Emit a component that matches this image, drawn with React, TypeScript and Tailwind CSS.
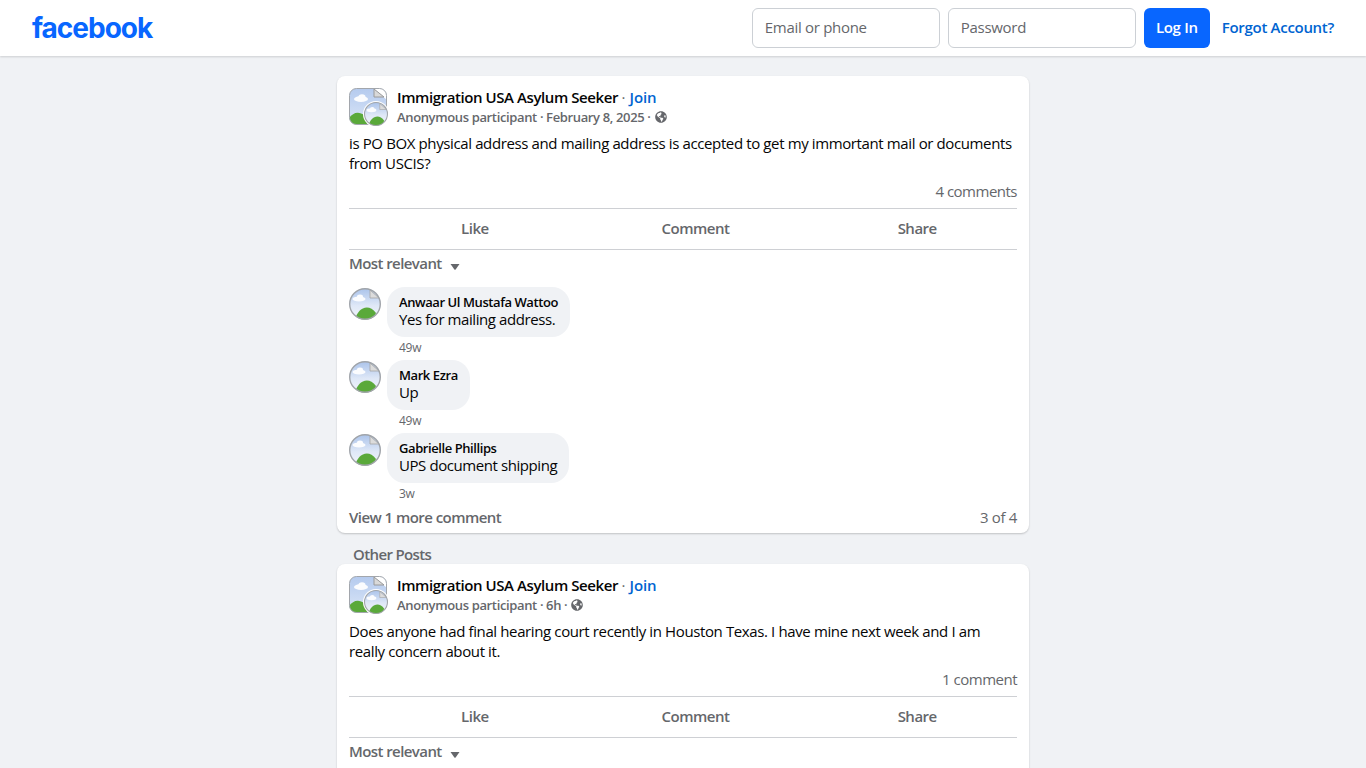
import React from 'react';
import { FaGlobeAmericas } from 'react-icons/fa';

const Avatar = ({ size = 32 }: { size?: number }) => {
  const id = `pic${size}`;
  return (
    <svg width={size} height={size} viewBox="0 0 32 32" className="block">
      <defs>
        <clipPath id={id}>
          <circle cx="16" cy="16" r="15.5" />
        </clipPath>
        <linearGradient id={`${id}sky`} x1="0" y1="0" x2="0" y2="1">
          <stop offset="0" stopColor="#a9c2ea" />
          <stop offset="0.55" stopColor="#dfe8f7" />
          <stop offset="1" stopColor="#f3f6fb" />
        </linearGradient>
      </defs>
      <g clipPath={`url(#${id})`}>
        <rect width="32" height="32" fill={`url(#${id}sky)`} />
        <ellipse cx="10" cy="11" rx="6.5" ry="2.6" fill="#fbfcfe" />
        <ellipse cx="11" cy="9" rx="3" ry="2.4" fill="#fbfcfe" />
        <path d="M6 32 C8 21 19 14 27 25 L24 32 Z" fill="#5aa93a" />
        <path d="M20 0 L32 11 L32 0 Z" fill="#fff" />
        <path d="M21 2 L21 10 L30 10 Z" fill="#dcdcdc" stroke="#a5a5a5" strokeWidth="0.8" />
      </g>
      <circle cx="16" cy="16" r="15.3" fill="none" stroke="#a0a4a9" strokeWidth="1.4" />
    </svg>
  );
};

const GroupAvatar = () => (
  <div className="relative w-10 h-9 shrink-0">
    <svg width="38" height="37" viewBox="0 0 38 37" className="block">
      <defs>
        <clipPath id="groupClip">
          <rect x="0.5" y="0.5" width="37" height="36" rx="7" />
        </clipPath>
        <linearGradient id="groupSky" x1="0" y1="0" x2="0" y2="1">
          <stop offset="0" stopColor="#b4caee" />
          <stop offset="1" stopColor="#dbe6f7" />
        </linearGradient>
      </defs>
      <g clipPath="url(#groupClip)">
        <rect width="38" height="37" fill="url(#groupSky)" />
        <ellipse cx="12" cy="11" rx="7" ry="3" fill="#fbfcfe" />
        <ellipse cx="13" cy="9" rx="3.5" ry="2.8" fill="#fbfcfe" />
        <path d="M0 37 L0 30 C6 22 14 22 24 37 Z" fill="#5aa93a" />
        <path d="M24 0 L38 12 L38 0 Z" fill="#fff" />
        <path d="M25 1 L25 9 L35 9 Z" fill="#d9d9d9" stroke="#9a9a9a" strokeWidth="1" />
      </g>
      <rect x="0.5" y="0.5" width="37" height="36" rx="7" fill="none" stroke="#a2a6ac" />
    </svg>
    <div className="absolute left-[14px] top-[13px] rounded-full bg-white p-px">
      <Avatar size={24} />
    </div>
  </div>
);

const PostHeader = ({ meta }: { meta: string }) => (
  <div className="flex gap-2 items-start">
    <GroupAvatar />
    <div className="min-w-0">
      <div className="h-5 text-[15px] leading-[18px] font-semibold text-[#050505] tracking-[-0.42px]">
        Immigration USA Asylum Seeker <span className="font-normal text-[#65676b]">·</span>{' '}
        <span className="ml-px text-[#0064d1] tracking-[-0.1px]">Join</span>
      </div>
      <div className="flex items-center gap-1 h-[18px] text-[13px] leading-[18px] font-semibold text-[#65676b] tracking-[-0.36px]">
        {meta} · <FaGlobeAmericas className="w-3 h-3 text-[#65676b]" />
      </div>
    </div>
  </div>
);

const Actions = () => (
  <div className="flex h-[42px] pb-px border-y border-[#ced0d4] text-[15px] font-semibold text-[#65676b] tracking-[-0.5px]">
    <div className="flex-1 flex items-center justify-center pl-[26px]">Like</div>
    <div className="flex-1 flex items-center justify-center pl-[21px]">Comment</div>
    <div className="flex-1 flex items-center justify-center pl-[22px]">Share</div>
  </div>
);

const MostRelevant = () => (
  <div className="flex items-center gap-2 h-[26px] text-[15px] font-semibold text-[#65676b] tracking-[-0.58px]">
    Most relevant
    <svg width="10" height="6" viewBox="0 0 10 6" className="mt-[7px]">
      <path d="M0.5 0 H9.5 L5.6 5.4 Q5 6 4.4 5.4 Z" fill="#65676b" />
    </svg>
  </div>
);

const Comment = ({ name, text, time }: { name: string; text: string; time: string }) => (
  <div className="flex gap-1.5 h-[73px] last:h-[68px]">
    <div className="pt-px shrink-0">
      <Avatar />
    </div>
    <div>
      <div className="bg-[#f0f2f5] rounded-[18px] px-3 h-[50px] pt-[7px] w-fit">
        <div className="text-[13px] leading-4 font-semibold text-[#050505] tracking-[-0.42px]">{name}</div>
        <div className="text-[15px] leading-[19px] text-[#050505] tracking-[-0.42px]">{text}</div>
      </div>
      <div className="pl-3 mt-[3px] text-xs leading-4 text-[#65676b] tracking-[-0.25px]">{time}</div>
    </div>
  </div>
);

const Card = ({ children }: { children: React.ReactNode }) => (
  <div className="bg-white rounded-lg shadow-[0_1px_2px_rgba(0,0,0,0.2)] px-3 pt-3">{children}</div>
);

export default function App() {
  return (
    <div className="h-screen overflow-hidden bg-[#f0f2f5] font-['Open_Sans',sans-serif]">
      {/* Top bar */}
      <header className="h-14 bg-white shadow-[0_1px_2px_rgba(0,0,0,0.15)] flex items-center justify-between pl-8 pr-8">
        <div className="text-[#0866ff] text-[28px] font-['Inter',sans-serif] font-bold tracking-[-1px] leading-none">
          facebook
        </div>
        <div className="flex items-center gap-2 text-[15px] tracking-[-0.3px]">
          <div className="w-[188px] h-10 border border-[#ccd0d5] rounded-md flex items-center px-3 pb-0.5 text-[#65676b]">
            Email or phone
          </div>
          <div className="w-[188px] h-10 border border-[#ccd0d5] rounded-md flex items-center px-3 pb-0.5 text-[#65676b]">
            Password
          </div>
          <button className="w-[66px] h-10 bg-[#0866ff] rounded-md text-white font-semibold pb-0.5">Log In</button>
          <a className="ml-1 text-[#0064d1] font-semibold pb-0.5 tracking-[-0.3px]">Forgot Account?</a>
        </div>
      </header>

      <main className="w-[692px] mx-auto pt-5">
        <Card>
          <PostHeader meta="Anonymous participant · February 8, 2025" />
          <p className="mt-[7px] text-[15px] leading-5 text-[#050505] tracking-[-0.38px]">
            is PO BOX physical address and mailing address is accepted to get my immortant mail or documents from
            USCIS?
          </p>
          <div className="mt-[6px] h-6 text-right text-[15px] leading-6 text-[#65676b] tracking-[-0.5px]">4 comments</div>
          <div className="mt-[5px]">
            <Actions />
          </div>
          <MostRelevant />
          <div className="mt-[11px]">
            <Comment name="Anwaar Ul Mustafa Wattoo" text="Yes for mailing address." time="49w" />
            <Comment name="Mark Ezra" text="Up" time="49w" />
            <Comment name="Gabrielle Phillips" text="UPS document shipping" time="3w" />
          </div>
          <div className="flex justify-between h-[32px] items-center text-[15px] text-[#65676b] tracking-[-0.55px]">
            <span className="font-semibold">View 1 more comment</span>
            <span className="tracking-[-0.35px]">3 of 4</span>
          </div>
        </Card>

        <div className="pl-4 h-[31px] pt-[11px] text-[15px] leading-5 font-semibold text-[#65676b] tracking-[-0.63px]">
          Other Posts
        </div>

        <Card>
          <PostHeader meta="Anonymous participant · 6h" />
          <p className="mt-[7px] text-[15px] leading-5 text-[#050505] tracking-[-0.38px]">
            Does anyone had final hearing court recently in Houston Texas. I have mine next week and I am really concern
            about it.
          </p>
          <div className="mt-[6px] h-6 text-right text-[15px] leading-6 text-[#65676b] tracking-[-0.5px]">1 comment</div>
          <div className="mt-[5px]">
            <Actions />
          </div>
          <MostRelevant />
          <div className="h-16" />
        </Card>
      </main>
    </div>
  );
}
